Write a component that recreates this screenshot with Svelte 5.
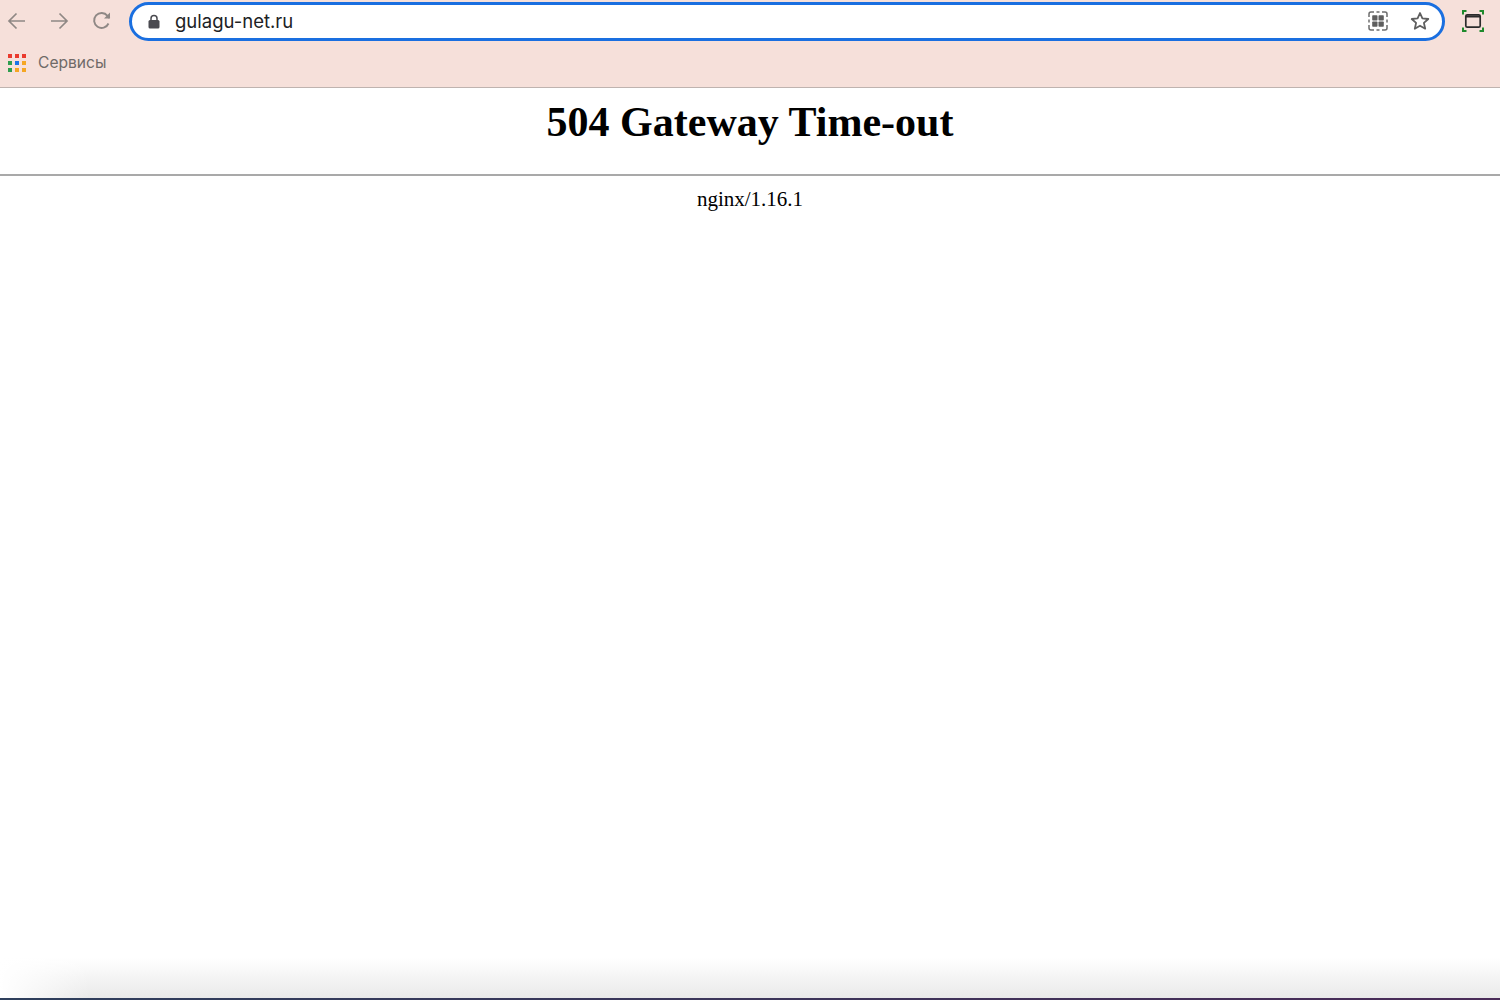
<script>
	const dots = [
		'#ea3a2d', '#ea3a2d', '#ea3a2d',
		'#2f9e4f', '#1a73e8', '#f5a623',
		'#2f9e4f', '#f5a623', '#f5a623'
	];
</script>

<div class="page">
	<header class="chrome">
		<div class="toolbar">
			<div class="nav">
				<svg width="20" height="20" viewBox="0 0 20 20" fill="none" stroke="#8f8885" stroke-width="1.7">
					<path d="M18 10H2M9.500 2.500L2 10l7.500 7.500" />
				</svg>
				<svg width="20" height="20" viewBox="0 0 20 20" fill="none" stroke="#8f8885" stroke-width="1.7">
					<path d="M2 10h16M10.500 2.500L18 10l-7.500 7.500" />
				</svg>
				<svg class="reload" width="20" height="20" viewBox="0 0 20 20" fill="none" stroke="#8f8885" stroke-width="1.900">
					<path d="M16.500 12.500A7.500 7.500 0 1 1 15.500 4.800L17.500 7" />
					<path d="M18 1.500V7.500H12" fill="#8f8885" stroke="none" />
				</svg>
			</div>
			<div class="omnibox">
				<svg class="lock" width="12" height="15" viewBox="0 0 12 15">
					<path d="M3 6.500V4.500a3 3 0 0 1 6 0v2" fill="none" stroke="#4a4a50" stroke-width="1.500" />
					<rect x="0.500" y="6" width="11" height="8.500" rx="1.500" fill="#4a4a50" />
				</svg>
				<span class="url">gulagu-net.ru</span>
				<svg class="qr" width="20" height="20" viewBox="0 0 20 20">
					<path d="M1 6V3a2 2 0 0 1 2-2h3M14 1h3a2 2 0 0 1 2 2v3M19 14v3a2 2 0 0 1-2 2h-3M6 19H3a2 2 0 0 1-2-2v-3M1 8.500v3M19 8.500v3M8.500 1h3M8.500 19h3" fill="none" stroke="#6d6d6d" stroke-width="1.500" />
					<rect x="4.200" y="4.200" width="5.300" height="5.300" rx="0.800" fill="#5f5f5f" />
					<rect x="10.500" y="4.200" width="5.300" height="5.300" rx="0.800" fill="#5f5f5f" />
					<rect x="4.200" y="10.500" width="5.300" height="5.300" rx="0.800" fill="#5f5f5f" />
					<rect x="10.500" y="10.500" width="5.300" height="5.300" rx="0.800" fill="#5f5f5f" />
				</svg>
				<svg class="star" width="20" height="20" viewBox="0 0 20 20">
					<path d="M10 2l2.400 5.400 5.900.6-4.400 3.900 1.300 5.800L10 14.700l-5.200 3 1.300-5.800L1.700 8l5.900-.6z" fill="none" stroke="#5f5f5f" stroke-width="1.800" stroke-linejoin="round" />
				</svg>
			</div>
			<svg class="capture" width="22" height="22" viewBox="0 0 22 22" fill="none">
				<path d="M1 4.500V1H4.500M17.500 1H21V4.500M21 17.500V21H17.500M4.500 21H1V17.500" stroke="#1e8a2c" stroke-width="2" />
				<rect x="3.800" y="4.800" width="14.400" height="12.400" rx="1.500" stroke="#2b2b2b" stroke-width="1.700" />
				<path d="M3.800 6.500h14.400" stroke="#2b2b2b" stroke-width="2" />
			</svg>
		</div>
		<div class="bookmarks">
			<div class="apps">
				{#each dots as c}
					<span style="background: {c}"></span>
				{/each}
			</div>
			<span class="services">Сервисы</span>
		</div>
	</header>

	<main>
		<h1>504 Gateway Time-out</h1>
		<hr />
		<p>nginx/1.16.1</p>
	</main>

	<div class="shade"></div>
	<div class="edge"></div>
</div>

<style>
	:global(body) {
		margin: 0;
		background: #fff;
	}
	.page {
		position: relative;
		height: 1000px;
		overflow: hidden;
		display: flex;
		flex-direction: column;
	}
	.chrome {
		background: #f6e0da;
		height: 87px;
		border-bottom: 1px solid #bfb3af;
		flex: none;
	}
	.toolbar {
		display: flex;
		align-items: center;
		height: 42px;
		padding-left: 7px;
	}
	.nav {
		display: flex;
		gap: 22px;
		width: 122px;
		flex: none;
	}
	.reload {
		margin-left: 0.500px;
	}
	.omnibox {
		display: flex;
		align-items: center;
		box-sizing: border-box;
		width: 1316px;
		height: 39px;
		background: #fff;
		border: 3px solid #1a6fe0;
		border-radius: 20px;
		padding: 0 12px 0 16px;
		flex: none;
	}
	.lock {
		margin-right: 15px;
	}
	.url {
		font: 18.500px 'Inter', 'Liberation Sans', sans-serif;
		color: #202124;
		flex: 1;
		position: relative;
		top: -0.500px;
	}
	.qr {
		margin-right: 22px;
	}
	.capture {
		margin-left: 17px;
	}
	.bookmarks {
		display: flex;
		align-items: center;
		height: 41px;
		padding-left: 8px;
		gap: 12px;
	}
	.apps {
		display: grid;
		grid-template-columns: repeat(3, 4px);
		gap: 3px;
	}
	.apps span {
		height: 4px;
		display: block;
	}
	.services {
		font: 15.600px 'Inter', 'Liberation Sans', sans-serif;
		color: #6f6a68;
	}
	main {
		text-align: center;
		font-family: 'Liberation Serif', 'Times New Roman', serif;
		color: #000;
	}
	h1 {
		font-size: 42px;
		line-height: 48px;
		font-weight: bold;
		margin: 10px 0 28px;
	}
	hr {
		margin: 0;
		border: none;
		border-top: 2px solid #a9a9a9;
	}
	p {
		font-size: 21px;
		line-height: 24px;
		margin: 11px 0 0;
	}
	.shade {
		position: absolute;
		left: 0;
		right: 0;
		bottom: 2px;
		height: 40px;
		background:
			linear-gradient(to right, #fff, rgba(255, 255, 255, 0) 90px),
			linear-gradient(to bottom, rgba(232, 232, 232, 0), #e9e9e9);
	}
	.edge {
		position: absolute;
		left: 0;
		right: 0;
		bottom: 0;
		height: 2px;
		background: linear-gradient(to right, #2e3f5c, #4a2b58);
	}
</style>
